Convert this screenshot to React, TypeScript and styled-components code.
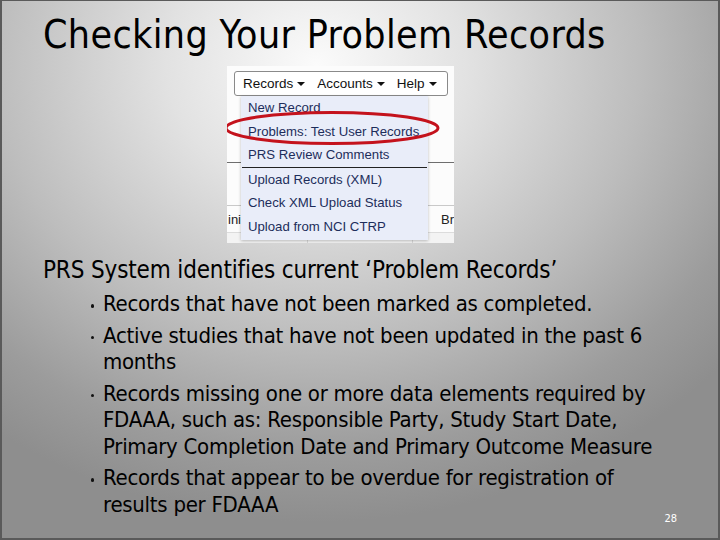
import React from "react";
import styled, { createGlobalStyle } from "styled-components";

const Global = createGlobalStyle`
  html, body { margin: 0; padding: 0; }
  body { width: 720px; height: 540px; overflow: hidden; }
`;

const Slide = styled.div`
  position: relative;
  box-sizing: border-box;
  width: 720px;
  height: 540px;
  overflow: hidden;
  border: 2px solid #5a5a5a;
  border-top-width: 1px;
  background: radial-gradient(ellipse 75% 85% at 44% 12%, #fbfbfb 0%, #e2e2e2 28%, #bdbdbd 60%, #9c9c9c 85%, #8e8e8e 100%);
  padding: 8px 0 0 41px;
  display: flex;
  flex-direction: column;
  font-family: "DejaVu Sans Condensed", "DejaVu Sans", sans-serif;
  font-stretch: condensed;
  color: #000;
  & > * { flex-shrink: 0; }
`;

const Title = styled.h1`
  margin: 0;
  font-weight: normal;
  font-size: 39px;
  line-height: 52px;
  letter-spacing: 0.35px;
  color: #000;
`;

const Shot = styled.div`
  position: relative;
  margin: 5px 0 0 184px;
  width: 227px;
  height: 177px;
  background: #fcfcfc;
  overflow: hidden;
  font-family: "Liberation Sans", Arial, sans-serif;
  font-stretch: normal;
  display: flex;
  flex-direction: column;
  & > * { flex-shrink: 0; }
`;

const MenuBar = styled.div`
  box-sizing: border-box;
  margin: 5px 0 0 7px;
  width: 214px;
  height: 25px;
  border: 1px solid #8a8a8a;
  border-radius: 3px;
  background: #fff;
  display: flex;
  align-items: center;
  padding-left: 8px;
  gap: 12px;
`;

const MenuTab = styled.span`
  font-size: 13.5px;
  color: #111;
  display: flex;
  align-items: center;
  gap: 4px;
`;

const Caret = styled.span`
  display: inline-block;
  width: 0;
  height: 0;
  border-left: 4px solid transparent;
  border-right: 4px solid transparent;
  border-top: 4px solid #111;
  margin-top: 1px;
`;

const TableRule = styled.div<{ $top: number; $color: string }>`
  margin-top: ${(p) => p.$top}px;
  height: 1px;
  background: ${(p) => p.$color};
`;

const TableRow = styled.div`
  height: 26px;
  display: flex;
  justify-content: space-between;
  align-items: center;
  font-size: 13px;
  color: #222;
  padding: 0 0 0 1px;
`;

const BottomRow = styled.div`
  flex: 1 0 auto;
  display: grid;
  grid-template-columns: 81px 105px 1fr;
  background: #f3f3f3;
  border-top: 1px solid #dcdcdc;
`;

const Cell = styled.div`
  border-right: 1px solid #d8d8d8;
`;

const Dropdown = styled.div`
  position: absolute;
  left: 14px;
  top: 30px;
  width: 187px;
  height: 144px;
  background: #e9edf9;
  box-shadow: 0 1px 3px rgba(0, 0, 0, 0.25);
  display: flex;
  flex-direction: column;
`;

const Item = styled.div`
  height: 23.5px;
  line-height: 23.5px;
  padding-left: 7px;
  font-size: 13.2px;
  color: #1d2d5b;
  white-space: nowrap;
`;

const Sep = styled.div`
  height: 1px;
  background: #222;
  margin: 0 1px;
`;

const Ring = styled.svg`
  position: absolute;
  left: -6px;
  top: 44px;
`;

const Lead = styled.p`
  margin: 14px 0 0 0;
  font-size: 24px;
  line-height: 27px;
  letter-spacing: -0.15px;
`;

const List = styled.ul`
  margin: 7px 0 0 0;
  padding: 0;
  list-style: none;
  display: flex;
  flex-direction: column;
  gap: 5px;
`;

const Bullet = styled.li`
  display: flex;
  font-size: 22px;
  line-height: 26.5px;
  letter-spacing: -0.27px;
`;

const Dot = styled.span`
  width: 60px;
  flex: none;
  display: flex;
  justify-content: flex-end;
  padding-right: 9px;
  box-sizing: border-box;
  padding-top: 13px;
  &::before {
    content: "";
    width: 3.5px;
    height: 3.5px;
    border-radius: 50%;
    background: #111;
  }
`;

const PageNum = styled.span`
  position: absolute;
  right: 41px;
  bottom: 13px;
  font-family: "DejaVu Sans", sans-serif;
  font-size: 11px;
  line-height: 13px;
  color: #fff;
`;

const bullets: React.ReactNode[] = [
  <>Records that have not been marked as completed.</>,
  <>
    Active studies that have not been updated in the past 6
    <br />
    months
  </>,
  <>
    Records missing one or more data elements required by
    <br />
    FDAAA, such as: Responsible Party, Study Start Date,
    <br />
    Primary Completion Date and Primary Outcome Measure
  </>,
  <>
    Records that appear to be overdue for registration of
    <br />
    results per FDAAA
  </>,
];

export default function App() {
  return (
    <>
      <Global />
      <Slide>
        <Title>Checking Your Problem Records</Title>
        <Shot>
          <MenuBar>
            <MenuTab>
              Records <Caret />
            </MenuTab>
            <MenuTab>
              Accounts <Caret />
            </MenuTab>
            <MenuTab>
              Help <Caret />
            </MenuTab>
          </MenuBar>
          <TableRule $top={66} $color="#6e6e6e" />
          <TableRule $top={42} $color="#c9c9c9" />
          <TableRow>
            <span>inic</span>
            <span>Br</span>
          </TableRow>
          <BottomRow>
            <Cell />
            <Cell />
            <div />
          </BottomRow>
          <Dropdown>
            <Item>New Record</Item>
            <Item>Problems: Test User Records</Item>
            <Item>PRS Review Comments</Item>
            <Sep />
            <Item>Upload Records (XML)</Item>
            <Item>Check XML Upload Status</Item>
            <Item>Upload from NCI CTRP</Item>
          </Dropdown>
          <Ring width="222" height="40" viewBox="0 0 222 40">
            <ellipse cx="111" cy="18" rx="106" ry="15.5" fill="none" stroke="#c4121c" strokeWidth="3" />
          </Ring>
        </Shot>
        <Lead>PRS System identifies current ‘Problem Records’</Lead>
        <List>
          {bullets.map((b, i) => (
            <Bullet key={i}>
              <Dot />
              <span>{b}</span>
            </Bullet>
          ))}
        </List>
        <PageNum>28</PageNum>
      </Slide>
    </>
  );
}
